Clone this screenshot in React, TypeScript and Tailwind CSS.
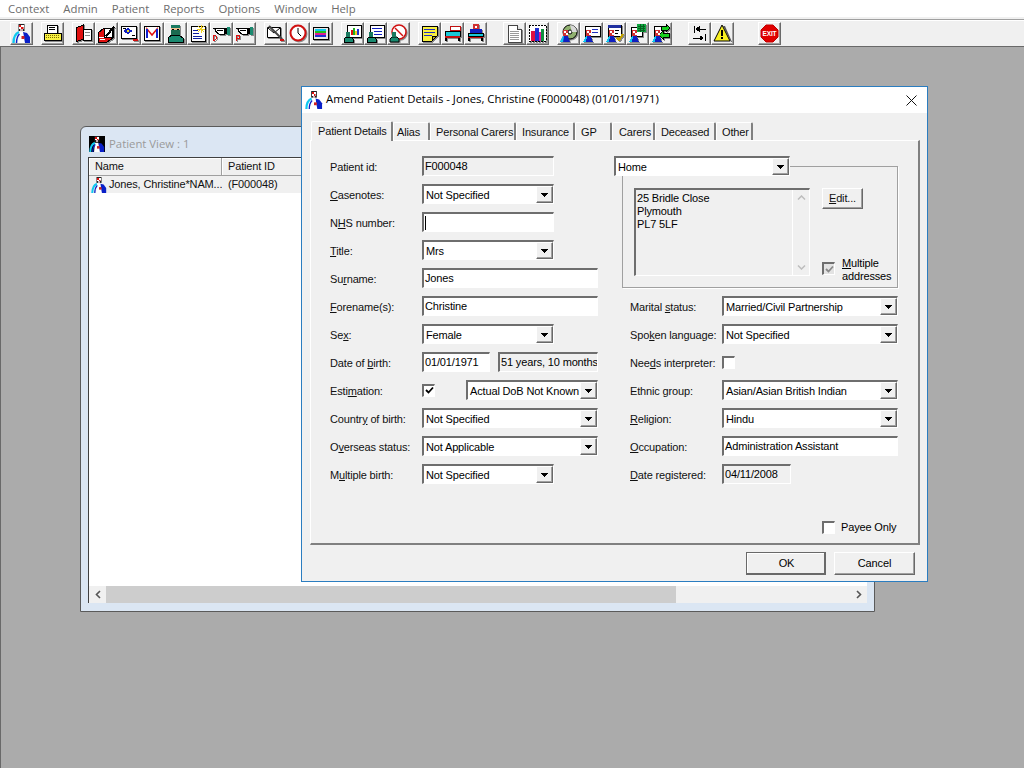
const SUNKEN =
  "border-t-2 border-l-2 border-r border-b border-t-[#6e6e6e] border-l-[#6e6e6e] border-r-white border-b-white";
const RAISED =
  "border border-t-white border-l-white border-r-[#696969] border-b-[#696969] shadow-[inset_-1px_-1px_0_#a0a0a0]";

const Doctor = ({ className = "w-[19px] h-[19px] shrink-0" }: { className?: string }) => (
  <svg viewBox="0 0 19 19" className={className}>
    <rect x="6.5" y="0" width="6" height="7" fill="#222" />
    <g shapeRendering="crispEdges">
      <rect x="7" y="1" width="2" height="2" fill="#e01010" />
      <rect x="9" y="3" width="2" height="2" fill="#e01010" />
      <rect x="9" y="1" width="3" height="2" fill="#fff" />
      <rect x="7" y="3" width="2" height="2" fill="#fff" />
      <rect x="11" y="3" width="1" height="2" fill="#e08080" />
      <rect x="8" y="5" width="3" height="2" fill="#c8b0b8" />
    </g>
    <path d="M11 8l4 1 3 4v6h-6z" fill="#0a20c8" />
    <path d="M7 8h4l2 11H6z" fill="#fff" />
    <path d="M1.5 19c0-5 1-9 5.5-11" fill="none" stroke="#10c8f0" strokeWidth="2.4" />
    <path d="M4.5 19c0-4 1-7 3-9" fill="none" stroke="#0a20c8" strokeWidth="1.4" />
    <rect x="9.5" y="12" width="3" height="3" fill="#d02020" />
  </svg>
);

const Nurse = () => (
  <>
    <path d="M1 18v-3l2-2h5l2 2v3z" fill="#1a8a70" stroke="#000" />
    <rect x="3" y="8" width="4" height="5" fill="#1a7a60" />
  </>
);

const Patient = () => (
  <>
    <rect x="4" y="6" width="5" height="6" fill="#d03030" />
    <rect x="5" y="7" width="2" height="2" fill="#fff" />
    <rect x="7" y="9" width="2" height="2" fill="#fff" />
    <path d="M1 18l3-6h5l2 6z" fill="#1020c0" />
    <path d="M1 18l3-6h1l-1 6z" fill="#10c8f0" />
  </>
);

const I = "w-[19px] h-[19px]";

const icons: React.ReactNode[] = [
  <Doctor key="doctor" />,
  // printer
  <svg key="p" viewBox="0 0 19 19" className={I} shapeRendering="crispEdges">
    <path d="M4 1h10v8H4z" fill="#fff" stroke="#000" />
    <path d="M6 3h6M6 5h6" stroke="#000" />
    <path d="M1 9h17v7H1z" fill="#f8f040" stroke="#000" />
    <path d="M3 11h13M3 13h13" stroke="#807000" strokeDasharray="1 1" />
  </svg>,
  // red book
  <svg key="b" viewBox="0 0 19 19" className={I} shapeRendering="crispEdges">
    <path d="M2 4l7-3v14l-7 3z" fill="#e01010" stroke="#000" />
    <path d="M9 5h8v11H9z" fill="#fff" stroke="#000" />
    <path d="M11 8h5M11 11h5" stroke="#888" />
  </svg>,
  // notes with pen
  <svg key="n" viewBox="0 0 19 19" className={I} shapeRendering="crispEdges">
    <path d="M1 9l6-5h9v10l-6 4H1z" fill="#e01010" stroke="#000" />
    <path d="M7 4h8v9H7z" fill="#fff" stroke="#000" />
    <path d="M8 12L16 2l2 1-8 10z" fill="#000" />
    <path d="M2 13l5 0M3 15l5 0" stroke="#fff" />
  </svg>,
  // eye card
  <svg key="e" viewBox="0 0 19 19" className={I} shapeRendering="crispEdges">
    <path d="M1 2h15v12H1z" fill="#fff" stroke="#000" />
    <path d="M3 7l5-3 5 3-5 3z" fill="#1020c0" />
    <rect x="7" y="6" width="2" height="2" fill="#f0e020" />
    <path d="M3 4h3M12 11h3" stroke="#000" />
    <rect x="13" y="15" width="5" height="2" fill="#d01010" />
  </svg>,
  // M
  <svg key="m" viewBox="0 0 19 19" className={I}>
    <rect x="1.5" y="2.5" width="15" height="14" fill="#fff" stroke="#000" />
    <path d="M4 14V5l5 6 5-6v9" fill="none" stroke="#e01010" strokeWidth="1.5" />
    <path d="M4 14V5" stroke="#1020d0" strokeWidth="2" />
    <path d="M14 14V5" stroke="#1020d0" strokeWidth="2" />
  </svg>,
  // surgeon
  <svg key="s" viewBox="0 0 19 19" className={I} shapeRendering="crispEdges">
    <rect x="5" y="1" width="9" height="3" fill="#1a7a60" />
    <rect x="5" y="4" width="9" height="2" fill="#f0c090" />
    <rect x="5" y="6" width="9" height="5" fill="#1a6a50" />
    <rect x="6" y="5" width="2" height="1" fill="#000" />
    <rect x="11" y="5" width="2" height="1" fill="#000" />
    <path d="M2 18v-4l4-3h7l4 3v4z" fill="#1a8a70" stroke="#000" />
  </svg>,
  // sparkle page
  <svg key="sp" viewBox="0 0 19 19" className={I} shapeRendering="crispEdges">
    <path d="M2 2h14v15H2z" fill="#fff" stroke="#000" />
    <path d="M4 6h5M4 9h6M4 12h9M4 14h9" stroke="#1020a0" />
    <path d="M12 1v8M8 5h8M9 2l6 6M15 2L9 8" stroke="#f0d020" />
  </svg>,
  // pointing hand D
  <svg key="d" viewBox="0 0 19 19" className={I} shapeRendering="crispEdges">
    <path d="M4 4h8v6H7L3 7z" fill="#fff" stroke="#000" />
    <path d="M1 4h7M5 6h6" stroke="#000" />
    <rect x="12" y="4" width="3" height="6" fill="#000" />
    <rect x="15" y="3" width="3" height="8" fill="#1a8a70" />
    <path d="M1 11h2l1 1v3l-1 1H1z" fill="none" stroke="#e01010" />
  </svg>,
  // pointing hand P
  <svg key="h" viewBox="0 0 19 19" className={I} shapeRendering="crispEdges">
    <path d="M4 4h8v6H7L3 7z" fill="#fff" stroke="#000" />
    <path d="M1 4h7M5 6h6" stroke="#000" />
    <rect x="12" y="4" width="3" height="6" fill="#000" />
    <rect x="15" y="3" width="3" height="8" fill="#1a8a70" />
    <path d="M1 17v-6h3v3H1" fill="none" stroke="#e01010" />
  </svg>,
  // envelope pen
  <svg key="ev" viewBox="0 0 19 19" className={I}>
    <path d="M1.5 3.5h13v10h-13z" fill="#fff" stroke="#000" />
    <path d="M2 4l6 5 6-5" fill="none" stroke="#000" />
    <path d="M3 2l13 13" stroke="#444" strokeWidth="2" />
    <rect x="14" y="15" width="4" height="2" fill="#d01010" />
  </svg>,
  // clock
  <svg key="c" viewBox="0 0 19 19" className={I}>
    <circle cx="9" cy="9" r="7.5" fill="#fff" stroke="#d01010" strokeWidth="2" />
    <path d="M9 4v5l3 3" fill="none" stroke="#000" />
  </svg>,
  // screen
  <svg key="sc" viewBox="0 0 19 19" className={I} shapeRendering="crispEdges">
    <path d="M1 3h15v12H1z" fill="#e8e8e8" stroke="#000" />
    <rect x="3" y="5" width="11" height="2" fill="#10c8f0" />
    <rect x="3" y="7" width="11" height="2" fill="#20c020" />
    <rect x="3" y="9" width="11" height="2" fill="#e02090" />
    <rect x="3" y="11" width="11" height="2" fill="#2030d0" />
  </svg>,
  // nurse chart
  <svg key="nc" viewBox="0 0 19 19" className={I} shapeRendering="crispEdges">
    <path d="M4 1h14v12H4z" fill="#fff" stroke="#000" />
    <rect x="8" y="6" width="2" height="5" fill="#e01010" />
    <rect x="10" y="4" width="2" height="7" fill="#20b020" />
    <rect x="12" y="7" width="2" height="4" fill="#f0d020" />
    <rect x="14" y="5" width="2" height="6" fill="#2030d0" />
    <Nurse />
  </svg>,
  <svg key="nf" viewBox="0 0 19 19" className={I} shapeRendering="crispEdges">
    <path d="M4 1h14v12H4z" fill="#fff" stroke="#000" />
    <path d="M6 4h10M8 7h8M8 10h8" stroke="#1020c0" />
    <Nurse />
  </svg>,
  <svg key="nn" viewBox="0 0 19 19" className={I}>
    <circle cx="10" cy="8" r="7" fill="#fff" stroke="#d01010" strokeWidth="1.5" />
    <path d="M6 4l8 8" stroke="#d01010" strokeWidth="1.5" />
    <Nurse />
  </svg>,
  // yellow note
  <svg key="y" viewBox="0 0 19 19" className={I} shapeRendering="crispEdges">
    <path d="M2 2h15v10l-5 5H2z" fill="#f8f040" stroke="#000" />
    <path d="M4 5h11M4 8h11M4 11h8" stroke="#2030c0" />
    <path d="M12 17v-5h5z" fill="#c0b020" stroke="#000" />
  </svg>,
  // bed
  <svg key="bd" viewBox="0 0 19 19" className={I} shapeRendering="crispEdges">
    <path d="M7 2h10v4H7z" fill="#fff" stroke="#c01010" />
    <rect x="2" y="7" width="15" height="5" fill="#18c8d8" stroke="#000" />
    <rect x="2" y="12" width="15" height="2" fill="#c01010" />
    <path d="M3 14v3M16 14v3" stroke="#000" strokeWidth="2" />
  </svg>,
  // bed with patient
  <svg key="bp" viewBox="0 0 19 19" className={I} shapeRendering="crispEdges">
    <rect x="7" y="0" width="6" height="5" fill="#d03030" />
    <rect x="9" y="2" width="2" height="2" fill="#fff" />
    <path d="M4 5h12v4H4z" fill="#1020c0" />
    <rect x="2" y="9" width="15" height="3" fill="#18c8d8" stroke="#000" />
    <rect x="2" y="13" width="15" height="1" fill="#c01010" />
    <path d="M3 14v3M16 14v3" stroke="#000" strokeWidth="2" />
  </svg>,
  // document
  <svg key="doc" viewBox="0 0 19 19" className={I} shapeRendering="crispEdges">
    <path d="M3 1h9l4 4v13H3z" fill="#fff" stroke="#444" />
    <path d="M12 1v4h4" fill="#ddd" stroke="#444" />
    <path d="M5 7h9M5 9h9M5 11h9M5 13h9M5 15h9" stroke="#999" />
  </svg>,
  // bar chart
  <svg key="ch" viewBox="0 0 19 19" className={I} shapeRendering="crispEdges">
    <path d="M1 1h17v16H1z" fill="#fff" stroke="#000" strokeDasharray="2 1" />
    <rect x="3" y="7" width="4" height="10" fill="#e01040" />
    <rect x="7" y="4" width="4" height="13" fill="#2030d0" />
    <rect x="11" y="8" width="2" height="9" fill="#e010a0" />
    <rect x="13" y="5" width="3" height="12" fill="#109040" />
  </svg>,
  // cd patient
  <svg key="cd" viewBox="0 0 19 19" className={I}>
    <circle cx="11" cy="8" r="7" fill="#90b070" stroke="#000" />
    <circle cx="11" cy="8" r="2" fill="#fff" stroke="#000" />
    <path d="M11 1a7 7 0 0 1 7 7h-5z" fill="#d8d8d8" />
    <Patient />
  </svg>,
  // patient + form
  <svg key="pf" viewBox="0 0 19 19" className={I} shapeRendering="crispEdges">
    <path d="M3 2h15v10H3z" fill="#fff" stroke="#000" />
    <path d="M10 5h6M10 8h6" stroke="#2030c0" />
    <Patient />
  </svg>,
  // patient + check form
  <svg key="pc" viewBox="0 0 19 19" className={I} shapeRendering="crispEdges">
    <path d="M3 1h13v11H3z" fill="#fff" stroke="#000" />
    <rect x="3" y="1" width="13" height="3" fill="#2030a0" />
    <path d="M10 6h4M10 9h3" stroke="#000" />
    <Patient />
    <path d="M12 14l2 2 4-6" fill="none" stroke="#c0a000" strokeWidth="2" />
  </svg>,
  // patient + green
  <svg key="pg" viewBox="0 0 19 19" className={I} shapeRendering="crispEdges">
    <path d="M3 3h11v9H3z" fill="#fff" stroke="#000" />
    <rect x="9" y="0" width="9" height="8" fill="#10a840" />
    <path d="M10 2h7M10 4h7M10 6h7M12 0v8M15 0v8" stroke="#086020" />
    <Patient />
  </svg>,
  // patient + arrows
  <svg key="pa" viewBox="0 0 19 19" className={I} shapeRendering="crispEdges">
    <path d="M3 2h9v10H3z" fill="#fff" stroke="#000" />
    <path d="M10 2h5V0l4 4-4 4V6h-5z" fill="#18d020" stroke="#000" />
    <path d="M18 9h-6V7l-4 4 4 4v-2h6z" fill="#18d020" stroke="#000" />
    <Patient />
  </svg>,
  // transfer arrows
  <svg key="ta" viewBox="0 0 19 19" className={I} shapeRendering="crispEdges">
    <path d="M4 2v7M15 10v7" stroke="#000" strokeWidth="1" />
    <path d="M16 5H6M6 5l3-2v4zM3 14h10M13 14l-3-2v4z" fill="#000" stroke="#000" />
  </svg>,
  // warning
  <svg key="w" viewBox="0 0 19 19" className={I}>
    <path d="M18 18L10 2l2 0 7 16z" fill="#555" />
    <path d="M9 1l8 16H1z" fill="#f8f020" stroke="#000" />
    <rect x="8" y="6" width="2" height="6" fill="#000" />
    <rect x="8" y="13" width="2" height="2" fill="#000" />
  </svg>,
  // exit
  <svg key="x" viewBox="0 0 19 19" className={I}>
    <path d="M6 1h7l5 5v7l-5 5H6l-5-5V6z" fill="#e00000" stroke="#c00000" />
    <text x="9.5" y="12" textAnchor="middle" fontSize="6.5" fontWeight="700" fill="#fff" fontFamily="Liberation Sans, sans-serif">EXIT</text>
  </svg>,
];

// these have no cast shadow in the reference
const flatIcons = new Set(["doctor", "ta", "x", "w"]);

// groups of buttons and the gap in front of each group
const groups: [number, number][] = [
  [1, 10],
  [1, 8],
  [8, 8],
  [3, 8],
  [3, 8],
  [3, 8],
  [2, 16],
  [5, 8],
  [2, 16],
  [1, 24],
];

const Toolbar = () => {
  let idx = 0;
  return (
    <div className="h-[27px] flex items-center bg-[#f0f0f0] border-t border-t-[#a0a0a0] shadow-[inset_0_1px_0_#fff] shrink-0">
      {groups.map(([count, gap], g) => (
        <div key={g} className="flex" style={{ marginLeft: gap }}>
          {Array.from({ length: count }).map(() => {
            const icon = icons[idx++] as React.ReactElement;
            const flat = flatIcons.has(String(icon.key));
            return (
              <div key={idx} className={`w-[23px] h-[23px] flex items-center justify-center bg-[#f0f0f0] ${RAISED}`}>
                <div className={flat ? "" : "drop-shadow-[1px_1px_0_#8a8a8a]"}>{icon}</div>
              </div>
            );
          })}
        </div>
      ))}
    </div>
  );
};

const Arrow = () => (
  <svg viewBox="0 0 7 4" className="w-[7px] h-[4px]" shapeRendering="crispEdges">
    <path d="M0 0h7v1H6v1H5v1H4v1H3V3H2V2H1V1H0z" fill="#000" />
  </svg>
);

const Box = ({ w, gray, className = "", children }: { w: string; gray?: boolean; className?: string; children?: React.ReactNode }) => (
  <div className={`h-[20px] ${w} ${SUNKEN} ${gray ? "bg-[#f0f0f0]" : "bg-white"} flex items-center pl-[1px] text-black whitespace-nowrap overflow-hidden ${className}`}>
    {children}
  </div>
);

const Combo = ({ w, value }: { w: string; value: string }) => (
  <div className={`h-[20px] ${w} ${SUNKEN} bg-white flex items-center text-black`}>
    <span className="flex-1 pl-[2px] pt-[1px] whitespace-nowrap overflow-hidden">{value}</span>
    <span className={`w-[17px] h-[17px] shrink-0 flex items-center justify-center bg-[#f0f0f0] ${RAISED}`}>
      <Arrow />
    </span>
  </div>
);

const Check = ({ checked, disabled }: { checked?: boolean; disabled?: boolean }) => (
  <span className={`w-[13px] h-[13px] shrink-0 flex items-center justify-center ${SUNKEN} ${disabled ? "bg-[#e3e3e3]" : "bg-white"}`}>
    {checked && (
      <svg viewBox="0 0 9 9" className="w-[9px] h-[9px]">
        <path d="M1 4l2.5 2.5L8 1.5" fill="none" stroke={disabled ? "#8a8a8a" : "#000"} strokeWidth="1.8" />
      </svg>
    )}
  </span>
);

const Row = ({ label, children }: { label: React.ReactNode; children: React.ReactNode }) => (
  <div className="h-[28px] flex items-center">
    <span className="w-[92px] shrink-0 pt-[2px] whitespace-nowrap text-[#111]">{label}</span>
    {children}
  </div>
);

const Tab = ({ label, w, pad, active }: { label: string; w: string; pad: string; active?: boolean }) => (
  <div
    className={`${w} ${pad} flex items-center border-l border-t border-r-2 border-l-white border-t-white border-r-[#808080] rounded-t-[2px] bg-[#f0f0f0] whitespace-nowrap ${
      active ? "h-[20px] -mb-px relative z-10" : "h-[18px] pt-[2px]"
    }`}
  >
    {label}
  </div>
);

const BTN = "h-[23px] flex items-center justify-center bg-[#f0f0f0] text-black";

const Dialog = () => (
  <div className="absolute left-[301px] top-[86px] w-[627px] h-[496px] bg-[#f0f0f0] border border-[#2b7dc0] flex flex-col">
    <div className="h-[26px] bg-white flex items-center pl-[3px] pr-[10px] shrink-0">
      <Doctor className="w-[18px] h-[18px] shrink-0" />
      <span className="ml-[3px] flex-1 pb-[2px] font-['Open_Sans','Noto_Sans',sans-serif] text-[11.35px] tracking-normal text-black">
        Amend Patient Details - Jones, Christine (F000048) (01/01/1971)
      </span>
      <svg viewBox="0 0 11 11" className="w-[11px] h-[11px]">
        <path d="M0.5 0.5l10 10M10.5 0.5l-10 10" stroke="#111" strokeWidth="1" />
      </svg>
    </div>
    <div className="flex items-end h-[27px] pl-[9px] shrink-0">
      <Tab label="Patient Details" w="w-[82px]" pad="pl-[6px]" active />
      <Tab label="Alias" w="w-[37px]" pad="pl-[3px]" />
      <Tab label="Personal Carers" w="w-[86px]" pad="pl-[5px]" />
      <Tab label="Insurance" w="w-[59px]" pad="pl-[5px]" />
      <Tab label="GP" w="w-[37px]" pad="pl-[5px]" />
      <Tab label="Carers" w="w-[43px]" pad="pl-[6px]" />
      <Tab label="Deceased" w="w-[61px]" pad="pl-[5px]" />
      <Tab label="Other" w="w-[37px]" pad="pl-[5px]" />
    </div>
    <div className="ml-[8px] w-[610px] h-[405px] border-t border-l border-t-white border-l-white border-r-2 border-b-2 border-r-[#808080] border-b-[#808080] flex pt-[11px] pl-[19px] shrink-0">
      <div className="w-[268px] shrink-0">
        <Row label="Patient id:">
          <Box w="w-[132px]" gray>F000048</Box>
        </Row>
        <Row label={<><u>C</u>asenotes:</>}>
          <Combo w="w-[132px]" value="Not Specified" />
        </Row>
        <Row label={<>N<u>H</u>S number:</>}>
          <Box w="w-[132px]"><span className="w-px h-[14px] bg-black" /></Box>
        </Row>
        <Row label={<><u>T</u>itle:</>}>
          <Combo w="w-[132px]" value="Mrs" />
        </Row>
        <Row label={<>Su<u>r</u>name:</>}>
          <Box w="w-[176px]">Jones</Box>
        </Row>
        <Row label={<><u>F</u>orename(s):</>}>
          <Box w="w-[176px]">Christine</Box>
        </Row>
        <Row label={<>Se<u>x</u>:</>}>
          <Combo w="w-[132px]" value="Female" />
        </Row>
        <Row label={<>Date of <u>b</u>irth:</>}>
          <Box w="w-[68px]">01/01/1971</Box>
          <Box w="w-[100px]" gray className="ml-[8px]">51 years, 10 months</Box>
        </Row>
        <Row label={<>Esti<u>m</u>ation:</>}>
          <Check checked />
          <span className="w-[31px]" />
          <Combo w="w-[132px]" value="Actual DoB Not Known" />
        </Row>
        <Row label={<>Countr<u>y</u> of birth:</>}>
          <Combo w="w-[176px]" value="Not Specified" />
        </Row>
        <Row label={<>O<u>v</u>erseas status:</>}>
          <Combo w="w-[176px]" value="Not Applicable" />
        </Row>
        <Row label={<>M<u>u</u>ltiple birth:</>}>
          <Combo w="w-[132px]" value="Not Specified" />
        </Row>
      </div>
      <div className="ml-[16px] w-[284px] shrink-0">
        <div className="relative h-[140px] pt-[14px]">
          <div className="absolute left-0 top-[4px] z-10">
            <Combo w="w-[176px]" value="Home" />
          </div>
          <div className="ml-[8px] h-[122px] border border-[#a0a0a0] shadow-[1px_1px_0_#fff] flex pl-[11px] pt-[21px]">
            <div className={`w-[176px] h-[88px] ${SUNKEN} flex`}>
              <div className="flex-1 leading-[13px] pl-[1px] pt-[2px] text-black">
                <div>25 Bridle Close</div>
                <div>Plymouth</div>
                <div>PL7 5LF</div>
              </div>
              <div className="w-[17px] border-l border-l-white flex flex-col justify-between items-center py-[5px]">
                <svg viewBox="0 0 9 5" className="w-[9px] h-[5px]"><path d="M1 4.5l3.5-3.5L8 4.5" fill="none" stroke="#bdbdbd" strokeWidth="1.5" /></svg>
                <svg viewBox="0 0 9 5" className="w-[9px] h-[5px]"><path d="M1 .5l3.5 3.5L8 .5" fill="none" stroke="#bdbdbd" strokeWidth="1.5" /></svg>
              </div>
            </div>
            <div className="ml-[12px] flex flex-col">
              <div className={`w-[41px] h-[21px] flex items-center justify-center ${RAISED}`}>
                <span><u>E</u>dit...</span>
              </div>
              <div className="mt-[48px] flex">
                <span className="mt-[5px]"><Check checked disabled /></span>
                <span className="ml-[7px] leading-[13px] text-black"><u>M</u>ultiple<br />addresses</span>
              </div>
            </div>
          </div>
        </div>
        <div className="pl-[16px]">
          <Row label={<>Marital <u>s</u>tatus:</>}>
            <Combo w="w-[176px]" value="Married/Civil Partnership" />
          </Row>
          <Row label={<>Spo<u>k</u>en language:</>}>
            <Combo w="w-[176px]" value="Not Specified" />
          </Row>
          <Row label={<>Nee<u>d</u>s interpreter:</>}>
            <Check />
          </Row>
          <Row label={<>Ethnic <u>g</u>roup:</>}>
            <Combo w="w-[176px]" value="Asian/Asian British Indian" />
          </Row>
          <Row label={<><u>R</u>eligion:</>}>
            <Combo w="w-[176px]" value="Hindu" />
          </Row>
          <Row label={<><u>O</u>ccupation:</>}>
            <Box w="w-[176px]">Administration Assistant</Box>
          </Row>
          <Row label={<><u>D</u>ate registered:</>}>
            <Box w="w-[69px]" gray>04/11/2008</Box>
          </Row>
          <div className="mt-[31px] ml-[192px] flex items-center">
            <Check />
            <span className="ml-[6px] whitespace-nowrap text-black">Payee Only</span>
          </div>
        </div>
      </div>
    </div>
    <div className="flex justify-end pt-[7px] pr-[12px] gap-[8px]">
      <div className={`${BTN} w-[80px] pl-[2px] border border-[#696969] border-b-2 border-r-2 shadow-[inset_1px_1px_0_#fff]`}>OK</div>
      <div className={`${BTN} w-[81px] ${RAISED}`}>Cancel</div>
    </div>
  </div>
);

const PatientView = () => (
  <div className="absolute left-[80px] top-[126px] w-[795px] h-[486px] bg-[#dbe6f3] border border-[#5a5a5a] rounded-t-[6px] flex flex-col px-[7px] pb-[8px]">
    <div className="h-[30px] flex items-center pl-[1px] pt-[3px] shrink-0">
      <div className="bg-black w-[16px] h-[16px] flex items-center justify-center">
        <Doctor className="w-[16px] h-[16px] shrink-0" />
      </div>
      <span className="ml-[4px] text-[#9a9a9a] font-['Open_Sans','Noto_Sans',sans-serif] text-[11.35px] tracking-normal">Patient View : 1</span>
    </div>
    <div className="flex-1 bg-white border-l border-t border-[#404040] flex flex-col">
      <div className="h-[18px] flex bg-[#f0f0f0] border-b border-[#a0a0a0] shrink-0">
        <div className="w-[133px] pl-[6px] border-r border-[#a0a0a0] shadow-[inset_1px_1px_0_#fff] flex items-center">Name</div>
        <div className="flex-1 pl-[6px] shadow-[inset_1px_1px_0_#fff] flex items-center">Patient ID</div>
      </div>
      <div className="h-[17px] flex items-center bg-[#f0f0f0] shrink-0">
        <div className="w-[133px] pl-[2px] flex items-center whitespace-nowrap overflow-hidden">
          <Doctor className="w-[16px] h-[16px] shrink-0" />
          <span className="ml-[2px]">Jones, Christine*NAM...</span>
        </div>
        <div className="pl-[6px]">(F000048)</div>
      </div>
      <div className="flex-1" />
      <div className="h-[17px] flex items-center bg-[#f0f0f0] shrink-0">
        <div className="w-[17px] flex justify-center shrink-0">
          <svg viewBox="0 0 6 9" className="w-[6px] h-[9px]"><path d="M5 1L1.5 4.5 5 8" fill="none" stroke="#555" strokeWidth="1.6" /></svg>
        </div>
        <div className="w-[570px] h-full bg-[#cdcdcd]" />
        <div className="flex-1" />
        <div className="w-[17px] flex justify-center shrink-0">
          <svg viewBox="0 0 6 9" className="w-[6px] h-[9px]"><path d="M1 1l3.5 3.5L1 8" fill="none" stroke="#555" strokeWidth="1.6" /></svg>
        </div>
      </div>
    </div>
  </div>
);

const menu = ["Context", "Admin", "Patient", "Reports", "Options", "Window", "Help"];

export default function App() {
  return (
    <div className="w-[1024px] h-[768px] flex flex-col overflow-hidden font-['Liberation_Sans',Arial,sans-serif] text-[11px] tracking-[-0.15px] text-[#111]">
      <div className="h-[17px] bg-white flex items-center shrink-0 pl-[8px] gap-[14px] font-['Open_Sans','Noto_Sans',sans-serif] text-[11.35px] tracking-normal text-[#6d6d6d]">
        {menu.map((m) => (
          <span key={m}>{m}</span>
        ))}
      </div>
      <div className="h-[2px] bg-[#f0f0f0] shrink-0" />
      <Toolbar />
      <div className="flex-1 relative bg-[#ababab] border-t border-l border-t-[#696969] border-l-[#696969]" />
      <PatientView />
      <Dialog />
    </div>
  );
}
